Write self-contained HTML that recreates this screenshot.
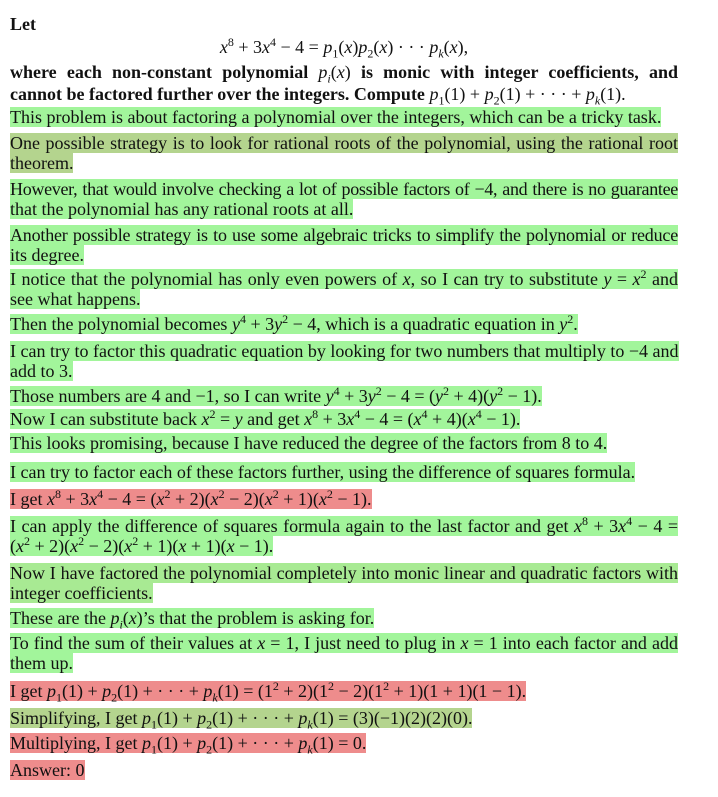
<!DOCTYPE html>
<html><head><meta charset="utf-8"><style>
body{margin:0;width:718px;height:797px;background:#fff;font-family:"Liberation Serif",serif;color:#111;position:relative;overflow:hidden}
.p{position:absolute;left:10px;width:668px;font-size:18px;line-height:20px;white-space:nowrap}
.p div{height:20px}
.j{text-align:justify;text-align-last:justify}
.t{letter-spacing:-0.2px;word-spacing:-1px}
.g span{background:#a2f59b}
.o span{background:#b4d48e}
.r span{background:#ee8c8c}
.m span{background:#a8ea93}
i{font-style:italic}
sup{font-size:12px;line-height:0}
sub{font-size:12px;line-height:0}
b{font-weight:bold}
.hd{position:absolute;left:10px;width:668px;font-size:18px;line-height:20px;white-space:nowrap}
</style></head><body>
<div class="hd" style="top:14px"><b>Let</b></div>
<div class="hd" style="top:37px;text-align:center"><i>x</i><sup>8</sup> + 3<i>x</i><sup>4</sup> − 4 = <i>p</i><sub>1</sub>(<i>x</i>)<i>p</i><sub>2</sub>(<i>x</i>) · · · <i>p<sub>k</sub></i>(<i>x</i>),</div>
<div class="hd j" style="top:62px"><b>where each non-constant polynomial</b> <i>p<sub>i</sub></i>(<i>x</i>) <b>is monic with integer coefficients, and</b></div>
<div class="hd" style="top:84px"><b>cannot be factored further over the integers. Compute</b> <i>p</i><sub>1</sub>(1) + <i>p</i><sub>2</sub>(1) + · · · + <i>p<sub>k</sub></i>(1).</div>

<div class="p g" style="top:107px"><div><span>This problem is about factoring a polynomial over the integers, which can be a tricky task.</span></div></div>
<div class="p o" style="top:133px"><div class="j"><span>One possible strategy is to look for rational roots of the polynomial, using the rational root</span></div><div><span>theorem.</span></div></div>
<div class="p g" style="top:179px"><div class="j t" style="letter-spacing:-0.3px"><span>However, that would involve checking a lot of possible factors of −4, and there is no guarantee</span></div><div><span>that the polynomial has any rational roots at all.</span></div></div>
<div class="p g" style="top:225px"><div class="j t"><span>Another possible strategy is to use some algebraic tricks to simplify the polynomial or reduce</span></div><div><span>its degree.</span></div></div>
<div class="p g" style="top:269px"><div class="j"><span>I notice that the polynomial has only even powers of <i>x</i>, so I can try to substitute <i>y</i> = <i>x</i><sup>2</sup> and</span></div><div><span>see what happens.</span></div></div>
<div class="p g" style="top:314px"><div><span>Then the polynomial becomes <i>y</i><sup>4</sup> + 3<i>y</i><sup>2</sup> − 4, which is a quadratic equation in <i>y</i><sup>2</sup>.</span></div></div>
<div class="p g" style="top:341px"><div class="j"><span>I can try to factor this quadratic equation by looking for two numbers that multiply to −4 and</span></div><div><span>add to 3.</span></div></div>
<div class="p g" style="top:386px"><div><span>Those numbers are 4 and −1, so I can write <i>y</i><sup>4</sup> + 3<i>y</i><sup>2</sup> − 4 = (<i>y</i><sup>2</sup> + 4)(<i>y</i><sup>2</sup> − 1).</span></div></div>
<div class="p g" style="top:409px"><div><span>Now I can substitute back <i>x</i><sup>2</sup> = <i>y</i> and get <i>x</i><sup>8</sup> + 3<i>x</i><sup>4</sup> − 4 = (<i>x</i><sup>4</sup> + 4)(<i>x</i><sup>4</sup> − 1).</span></div></div>
<div class="p g" style="top:433px"><div><span>This looks promising, because I have reduced the degree of the factors from 8 to 4.</span></div></div>
<div class="p g" style="top:462px"><div><span>I can try to factor each of these factors further, using the difference of squares formula.</span></div></div>
<div class="p r" style="top:489px"><div><span>I get <i>x</i><sup>8</sup> + 3<i>x</i><sup>4</sup> − 4 = (<i>x</i><sup>2</sup> + 2)(<i>x</i><sup>2</sup> − 2)(<i>x</i><sup>2</sup> + 1)(<i>x</i><sup>2</sup> − 1).</span></div></div>
<div class="p g" style="top:516px"><div class="j"><span>I can apply the difference of squares formula again to the last factor and get <i>x</i><sup>8</sup> + 3<i>x</i><sup>4</sup> − 4 =</span></div><div><span>(<i>x</i><sup>2</sup> + 2)(<i>x</i><sup>2</sup> − 2)(<i>x</i><sup>2</sup> + 1)(<i>x</i> + 1)(<i>x</i> − 1).</span></div></div>
<div class="p m" style="top:563px"><div class="j"><span>Now I have factored the polynomial completely into monic linear and quadratic factors with</span></div><div><span>integer coefficients.</span></div></div>
<div class="p g" style="top:608px"><div><span>These are the <i>p<sub>i</sub></i>(<i>x</i>)’s that the problem is asking for.</span></div></div>
<div class="p g" style="top:633px"><div class="j"><span>To find the sum of their values at <i>x</i> = 1, I just need to plug in <i>x</i> = 1 into each factor and add</span></div><div><span>them up.</span></div></div>
<div class="p r" style="top:681px"><div><span>I get <i>p</i><sub>1</sub>(1) + <i>p</i><sub>2</sub>(1) + · · · + <i>p<sub>k</sub></i>(1) = (1<sup>2</sup> + 2)(1<sup>2</sup> − 2)(1<sup>2</sup> + 1)(1 + 1)(1 − 1).</span></div></div>
<div class="p o" style="top:708px"><div><span>Simplifying, I get <i>p</i><sub>1</sub>(1) + <i>p</i><sub>2</sub>(1) + · · · + <i>p<sub>k</sub></i>(1) = (3)(−1)(2)(2)(0).</span></div></div>
<div class="p r" style="top:733px"><div><span>Multiplying, I get <i>p</i><sub>1</sub>(1) + <i>p</i><sub>2</sub>(1) + · · · + <i>p<sub>k</sub></i>(1) = 0.</span></div></div>
<div class="p r" style="top:760px"><div><span>Answer: 0</span></div></div>
</body></html>
